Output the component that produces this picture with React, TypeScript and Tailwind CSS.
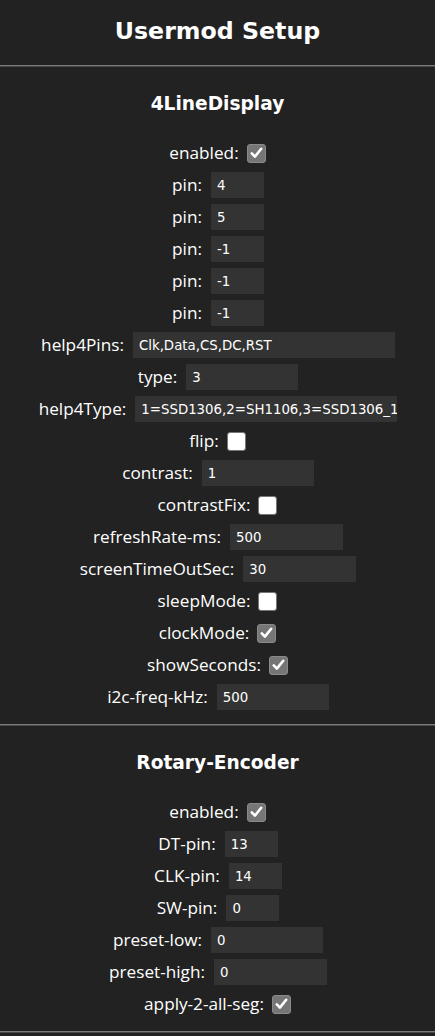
import React from "react";

const LABEL = { fontFamily: '"Open Sans", "Noto Sans", sans-serif' };
const INPUT = { fontFamily: '"DejaVu Sans", Verdana, sans-serif' };
const HEAD = { fontFamily: '"DejaVu Sans", Verdana, sans-serif' };

function Check({ on }: { on: boolean }) {
  return on ? (
    <span className="inline-flex w-[19px] h-[19px] rounded-[3px] bg-[#767676] border border-[#8a8a8a] items-center justify-center">
      <svg width="13" height="12" viewBox="0 0 13 12">
        <path d="M1.8 6.4 L4.9 9.6 L11.2 1.8" fill="none" stroke="#fff" strokeWidth="2.6" strokeLinecap="round" strokeLinejoin="round" />
      </svg>
    </span>
  ) : (
    <span className="inline-block w-[19px] h-[19px] rounded-[3px] bg-white border border-[#767676]" />
  );
}

type Row =
  | { l: string; c: boolean }
  | { l: string; v: string; w: number };

function RowView({ r }: { r: Row }) {
  return (
    <div className="h-8 flex items-center justify-center">
      <span className="text-[17.2px] text-white leading-none" style={LABEL}>
        {r.l}:
      </span>
      {"c" in r ? (
        <span className="ml-[8px] flex">
          <Check on={r.c} />
        </span>
      ) : (
        <input
          readOnly
          value={r.v}
          className="ml-[9px] mr-[-1px] h-[26px] bg-[#333] text-white text-[13.33px] pl-[6px] pr-0 outline-none border-0"
          style={{ ...INPUT, width: r.w }}
        />
      )}
    </div>
  );
}

const s1: Row[] = [
  { l: "enabled", c: true },
  { l: "pin", v: "4", w: 53 },
  { l: "pin", v: "5", w: 53 },
  { l: "pin", v: "-1", w: 53 },
  { l: "pin", v: "-1", w: 53 },
  { l: "pin", v: "-1", w: 53 },
  { l: "help4Pins", v: "Clk,Data,CS,DC,RST", w: 262 },
  { l: "type", v: "3", w: 112 },
  { l: "help4Type", v: "1=SSD1306,2=SH1106,3=SSD1306_128x64,4=SSD1305", w: 262 },
  { l: "flip", c: false },
  { l: "contrast", v: "1", w: 112 },
  { l: "contrastFix", c: false },
  { l: "refreshRate-ms", v: "500", w: 113 },
  { l: "screenTimeOutSec", v: "30", w: 113 },
  { l: "sleepMode", c: false },
  { l: "clockMode", c: true },
  { l: "showSeconds", c: true },
  { l: "i2c-freq-kHz", v: "500", w: 112 },
];

const s2: Row[] = [
  { l: "enabled", c: true },
  { l: "DT-pin", v: "13", w: 53 },
  { l: "CLK-pin", v: "14", w: 53 },
  { l: "SW-pin", v: "0", w: 53 },
  { l: "preset-low", v: "0", w: 112 },
  { l: "preset-high", v: "0", w: 113 },
  { l: "apply-2-all-seg", c: true },
];

function Hr() {
  return (
    <div className="w-full">
      <div className="h-px bg-[#7a7a7a]" />
      <div className="h-px bg-[#4a4a4a]" />
    </div>
  );
}

function Section({ title, rows }: { title: string; rows: Row[] }) {
  return (
    <div>
      <Hr />
      <div className="h-[70px] flex items-center justify-center pt-[3px]">
        <span className="text-[18.6px] font-bold text-white" style={HEAD}>
          {title}
        </span>
      </div>
      {rows.map((r, i) => (
        <RowView key={i} r={r} />
      ))}
      <div className="h-[11px]" />
    </div>
  );
}

export default function App() {
  return (
    <div className="w-[435px] h-[1036px] bg-[#222] overflow-hidden">
      <div className="h-[65px] flex items-center justify-center pb-[1px]">
        <span className="text-[23.7px] font-bold text-white" style={HEAD}>
          Usermod Setup
        </span>
      </div>
      <Section title="4LineDisplay" rows={s1} />
      <Section title="Rotary-Encoder" rows={s2} />
      <Hr />
    </div>
  );
}
